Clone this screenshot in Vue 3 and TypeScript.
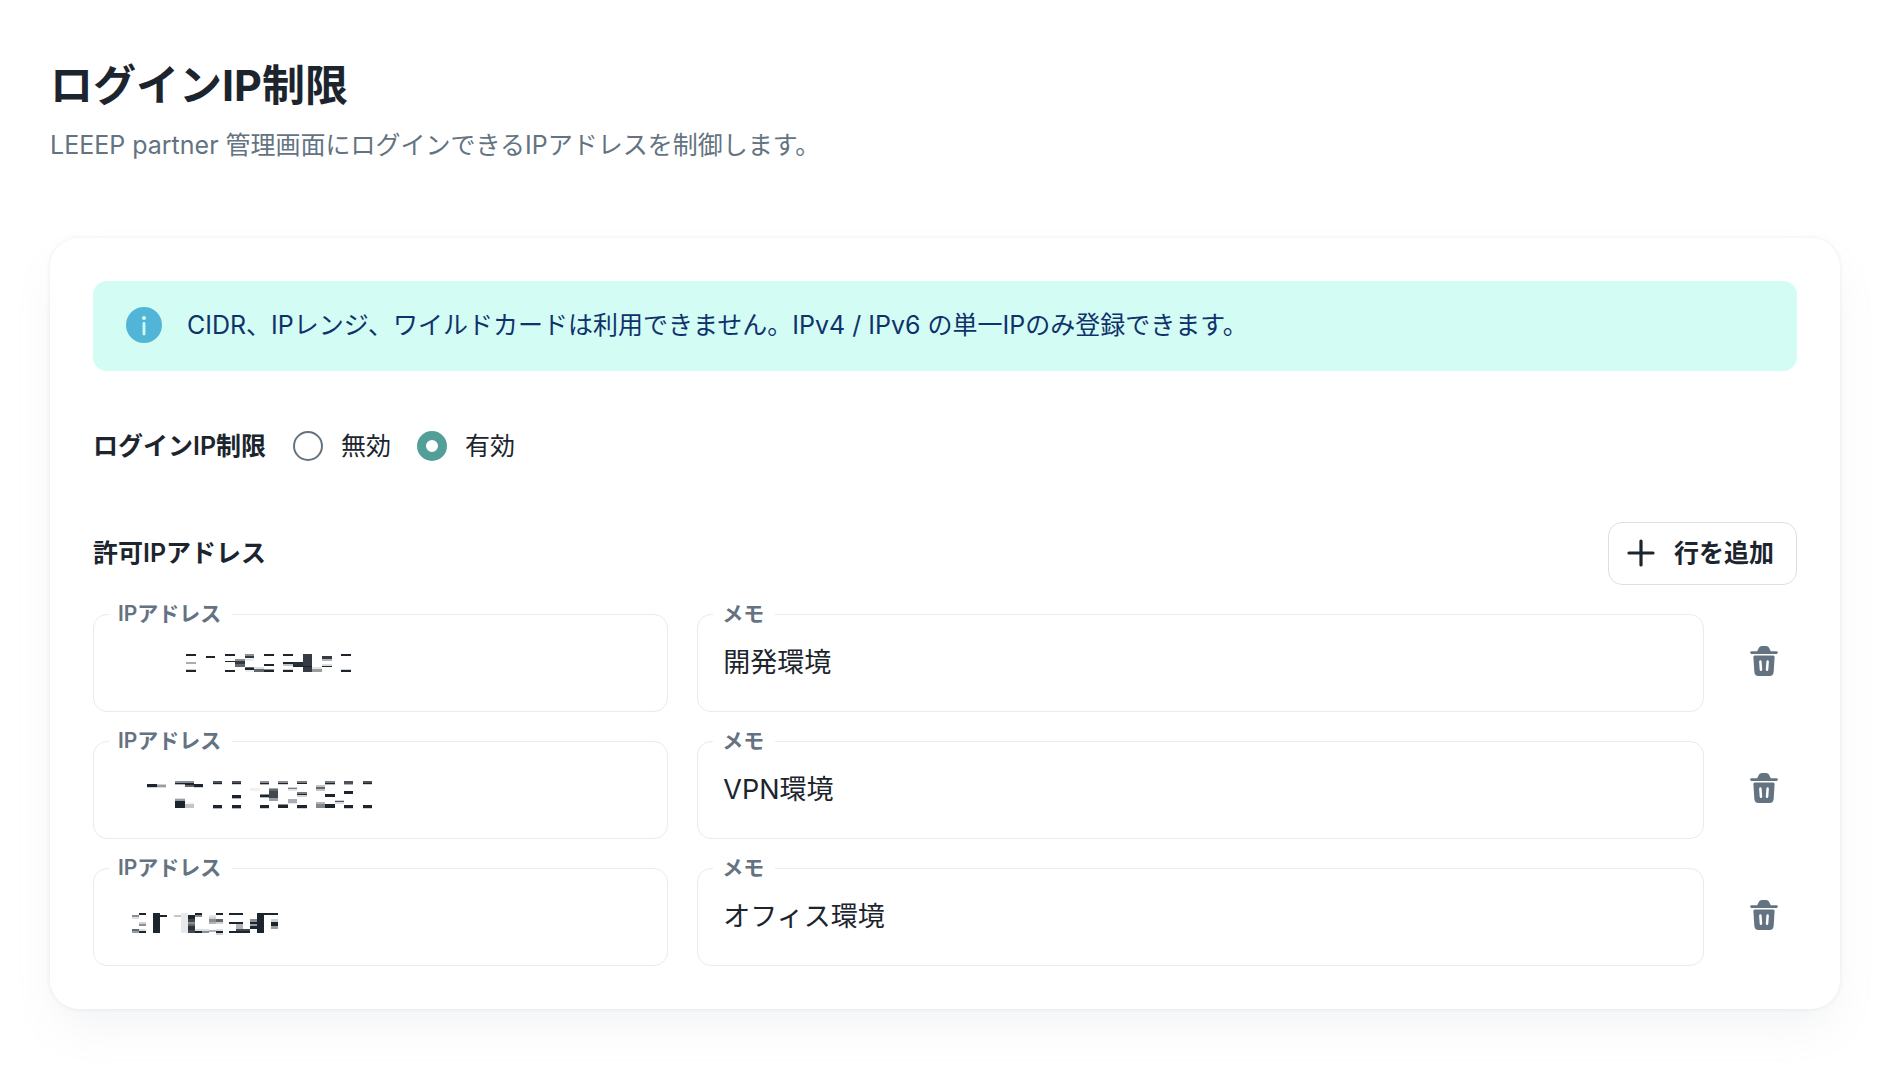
<script setup lang="ts">
import { ref } from 'vue'

type Block = [x: number, y: number, w: number, h: number, fill: string]

interface AllowedIp {
  id: number
  memo: string
  origin: string
  mask: Block[]
}

const K = '#1c252e'
const enabled = ref<'off' | 'on'>('on')

// Masked addresses: each one is a set of blocks drawn over the empty box.
const rows = ref<AllowedIp[]>([
  {
    id: 1,
    memo: '開発環境',
    origin: '39 342',
    mask: [
      [318, 462, 30, 6, K], [318, 486, 30, 6, '#a9adb1'], [318, 507, 30, 3, '#cfd1d4'], [318, 510, 30, 6, K],
      [378, 468, 27, 7, K],
      [435, 462, 30, 6, K], [435, 483, 30, 3, K], [435, 510, 30, 6, K],
      [465, 477, 30, 6, '#8b8f94'], [465, 483, 30, 10, '#343b43'], [465, 493, 30, 7, '#62676d'],
      [495, 462, 27, 6, '#8b8f94'], [495, 468, 27, 7, '#343b43'], [495, 475, 27, 8, '#ecedee'],
      [495, 500, 27, 3, '#62676d'], [495, 503, 27, 7, K], [495, 510, 27, 6, '#ecedee'],
      [522, 502, 30, 5, '#dcdee0'], [522, 507, 30, 9, '#62676d'],
      [552, 462, 30, 6, K], [552, 492, 30, 6, K], [552, 507, 30, 3, '#8b8f94'], [552, 510, 30, 6, K],
      [609, 462, 30, 6, K], [609, 486, 30, 6, K], [609, 492, 30, 6, '#c3c6c9'], [609, 507, 30, 3, '#cfd1d4'], [609, 510, 30, 6, K],
      [639, 486, 30, 12, '#272f38'], [639, 498, 30, 3, K],
      [669, 462, 27, 54, '#343b43'], [669, 498, 27, 3, K],
      [696, 501, 30, 6, '#e4e5e7'], [696, 507, 30, 9, '#999da1'],
      [726, 468, 30, 9, '#343b43'], [726, 477, 30, 6, '#b1b4b8'], [726, 491, 30, 7, '#dcdee0'], [726, 498, 30, 3, K],
      [783, 462, 30, 6, K], [783, 507, 30, 3, '#cfd1d4'], [783, 510, 30, 6, K],
    ],
  },
  {
    id: 2,
    memo: 'VPN環境',
    origin: '-51 33',
    mask: [
      [111, 162, 30, 9, K], [111, 171, 30, 3, '#cfd1d4'], [141, 162, 27, 3, '#cfd1d4'], [141, 165, 27, 6, '#999da1'], [141, 171, 27, 3, '#dcdee0'],
      [195, 153, 57, 6, '#8b8f94'], [195, 159, 57, 3, K], [195, 162, 30, 3, '#b1b4b8'],
      [225, 159, 27, 6, K], [225, 165, 27, 6, '#62676d'], [252, 162, 27, 9, K], [252, 171, 27, 3, '#cfd1d4'],
      [195, 204, 30, 3, '#dcdee0'], [195, 207, 30, 6, '#999da1'], [195, 213, 30, 21, K], [225, 216, 27, 6, '#f4f4f5'], [225, 222, 27, 12, '#c3c6c9'],
      [309, 153, 27, 9, '#4c535a'], [309, 159, 27, 3, K], [309, 162, 27, 3, '#cfd1d4'], [309, 225, 27, 9, K], [309, 234, 27, 3, '#b1b4b8'],
      [366, 153, 27, 9, '#4c535a'], [366, 159, 27, 3, K], [366, 162, 27, 3, '#cfd1d4'], [366, 195, 27, 9, K], [366, 204, 27, 3, '#b1b4b8'], [366, 225, 27, 9, K], [366, 234, 27, 3, '#b1b4b8'],
      [420, 174, 30, 9, '#f0f0f1'],
      [450, 153, 27, 6, '#8b8f94'], [450, 159, 27, 3, K], [450, 162, 27, 3, '#b1b4b8'], [450, 192, 27, 3, '#8b8f94'], [450, 195, 27, 6, K], [450, 201, 27, 3, '#b1b4b8'], [450, 225, 27, 9, K], [450, 234, 27, 3, '#cfd1d4'],
      [477, 174, 27, 3, '#a9adb1'], [477, 177, 27, 6, '#62676d'], [477, 183, 27, 22, '#414850'], [477, 205, 27, 8, '#999da1'],
      [504, 153, 30, 6, '#8b8f94'], [504, 159, 30, 3, K], [504, 162, 30, 3, '#cfd1d4'], [504, 222, 30, 3, '#8b8f94'], [504, 225, 30, 9, K],
      [534, 171, 27, 3, '#cfd1d4'], [534, 174, 27, 3, '#777c81'], [534, 177, 27, 6, '#e4e5e7'], [534, 207, 27, 12, '#a9adb1'], [534, 219, 27, 3, '#e4e5e7'],
      [561, 153, 30, 6, '#777c81'], [561, 159, 30, 3, K], [561, 186, 30, 6, '#777c81'], [561, 192, 30, 3, K], [561, 195, 30, 6, '#cfd1d4'], [561, 225, 30, 9, K], [561, 234, 30, 3, '#cfd1d4'],
      [618, 165, 27, 6, '#c3c6c9'], [618, 171, 27, 6, '#62676d'], [618, 177, 27, 6, '#c3c6c9'], [618, 216, 27, 6, '#b1b4b8'], [618, 222, 27, 12, '#82878c'],
      [645, 153, 30, 6, '#777c81'], [645, 159, 30, 3, K], [645, 162, 30, 3, '#b1b4b8'], [645, 192, 30, 9, K], [645, 222, 30, 12, K],
      [675, 210, 27, 3, '#cfd1d4'], [675, 213, 27, 4, '#4c535a'], [675, 217, 27, 4, '#dcdee0'],
      [702, 153, 27, 9, '#4c535a'], [702, 162, 27, 3, '#b1b4b8'], [702, 183, 27, 10, K], [702, 225, 27, 9, K], [702, 234, 27, 3, '#cfd1d4'],
      [759, 153, 27, 9, '#4c535a'], [759, 159, 27, 3, K], [759, 162, 27, 3, '#cfd1d4'], [759, 225, 27, 9, K], [759, 234, 27, 3, '#cfd1d4'],
    ],
  },
  {
    id: 3,
    memo: 'オフィス環境',
    origin: '-51 24',
    mask: [
      [66, 165, 21, 6, '#8b8f94'], [66, 171, 21, 6, '#dcdee0'], [87, 159, 21, 6, K], [87, 186, 21, 6, '#cfd1d4'], [87, 192, 21, 6, '#8b8f94'],
      [66, 207, 21, 6, '#62676d'], [66, 213, 21, 6, '#999da1'], [87, 207, 21, 6, '#dcdee0'], [87, 213, 21, 6, K],
      [129, 159, 21, 60, K], [150, 165, 21, 6, K],
      [192, 165, 21, 6, '#c3c6c9'], [213, 159, 21, 60, '#e8e9ea'],
      [234, 165, 21, 12, K], [234, 177, 21, 9, '#414850'], [234, 186, 21, 6, '#8b8f94'], [234, 192, 21, 6, '#62676d'], [234, 198, 21, 12, '#2b333b'], [234, 210, 21, 9, '#414850'],
      [255, 159, 21, 6, K], [255, 165, 21, 6, '#8b8f94'], [255, 207, 21, 6, '#dcdee0'], [255, 213, 21, 6, K],
      [276, 207, 21, 6, '#dcdee0'], [276, 213, 21, 6, '#8b8f94'],
      [297, 165, 21, 6, '#e4e5e7'], [297, 171, 21, 6, '#cfd1d4'], [297, 177, 21, 9, '#8b8f94'], [297, 186, 21, 6, '#b1b4b8'], [297, 210, 21, 6, '#b1b4b8'],
      [318, 159, 21, 6, K], [318, 177, 21, 9, '#62676d'], [318, 186, 21, 6, '#cfd1d4'], [318, 207, 21, 6, '#dcdee0'], [318, 213, 21, 6, K], [318, 219, 21, 6, '#cfd1d4'],
      [357, 159, 42, 6, K], [357, 186, 42, 6, K], [357, 213, 63, 6, K],
      [378, 192, 21, 15, '#b1b4b8'], [378, 207, 42, 6, '#414850'],
      [420, 177, 21, 9, '#8b8f94'], [420, 186, 21, 6, K], [420, 192, 21, 6, '#999da1'], [420, 198, 21, 9, K],
      [441, 159, 63, 6, K], [441, 159, 21, 60, K],
      [483, 177, 21, 9, '#cfd1d4'], [483, 186, 21, 12, K], [483, 198, 21, 9, '#999da1'],
    ],
  },
])

let nextId = 4

function addRow(): void {
  rows.value.push({ id: nextId++, memo: '', origin: '0 0', mask: [] })
}

function removeRow(id: number): void {
  rows.value = rows.value.filter((row) => row.id !== id)
}
</script>

<template>
  <main class="page">
    <header class="head">
      <h1>ログインIP制限</h1>
      <p>LEEEP partner 管理画面にログインできるIPアドレスを制御します。</p>
    </header>

    <section class="card">
      <div class="alert" role="note">
        <svg class="info" viewBox="0 0 36 36" aria-hidden="true">
          <circle cx="18" cy="18" r="18" fill="#51b5d8" />
          <circle cx="18" cy="11" r="2" fill="#d3fcf5" />
          <path d="M18 16.500v10.500" stroke="#d3fcf5" stroke-width="2.800" stroke-linecap="round" />
        </svg>
        <span>CIDR、IPレンジ、ワイルドカードは利用できません。IPv4 / IPv6 の単一IPのみ登録できます。</span>
      </div>

      <div class="toggle" role="radiogroup" aria-labelledby="toggle-title">
        <span id="toggle-title" class="strong">ログインIP制限</span>
        <label class="choice"><input v-model="enabled" type="radio" name="enabled" value="off" />無効</label>
        <label class="choice"><input v-model="enabled" type="radio" name="enabled" value="on" />有効</label>
      </div>

      <div class="bar">
        <h2 class="strong">許可IPアドレス</h2>
        <button class="add" type="button" @click="addRow">
          <svg viewBox="0 0 28 28" aria-hidden="true">
            <path d="M14 2v24M2 14h24" stroke="currentColor" stroke-width="3.200" stroke-linecap="round" />
          </svg>
          行を追加
        </button>
      </div>

      <div class="rows">
        <div v-for="row in rows" :key="row.id" class="row">
          <div class="field">
            <label :for="`ip-${row.id}`">IPアドレス</label>
            <input :id="`ip-${row.id}`" type="text" />
            <svg class="mask" :viewBox="`${row.origin} 960 294`" shape-rendering="crispEdges" aria-hidden="true">
              <rect v-for="(b, i) in row.mask" :key="i" :x="b[0]" :y="b[1]" :width="b[2]" :height="b[3]" :fill="b[4]" />
            </svg>
          </div>
          <div class="field">
            <label :for="`memo-${row.id}`">メモ</label>
            <input :id="`memo-${row.id}`" v-model="row.memo" type="text" />
          </div>
          <button class="remove" type="button" aria-label="削除" @click="removeRow(row.id)">
            <svg viewBox="0 0 28 30" aria-hidden="true">
              <path d="M1.500 5.200H7.200C8.600 3 9 0 12 0h4c3 0 3.400 3 4.800 5.200h5.700a1.350 1.350 0 0 1 0 2.700h-25a1.350 1.350 0 0 1 0-2.700z" fill="currentColor" />
              <path fill-rule="evenodd" d="M4.800 9.500h18.400q1.500 0 1.400 1.500l-.9 14.500q-.3 4.500-4.200 4.500h-11q-3.900 0-4.200-4.500L3.400 11q-.1-1.500 1.400-1.500zM10.300 14.200q-1.300.1-1.200 1.500l.6 8q.2 1.400 1.400 1.300 1.200-.1 1.100-1.500l-.6-8q-.2-1.400-1.300-1.300zM17.700 14.200q1.300.1 1.200 1.500l-.6 8q-.2 1.400-1.400 1.300-1.200-.1-1.100-1.500l.6-8q.2-1.400 1.300-1.300z" fill="currentColor" />
            </svg>
          </button>
        </div>
      </div>
    </section>
  </main>
</template>

<style>
body {
  margin: 0;
  background: #fff;
}
</style>

<style scoped>
.page {
  box-sizing: border-box;
  padding: 53px 48px 70px 50px;
  color: #1c252e;
  font-family: Inter, "Noto Sans CJK JP", sans-serif;
  font-size: 25px;
  line-height: 38px;
}

.page *,
.page *::before {
  box-sizing: border-box;
}

.head {
  margin-bottom: 74px;
}

h1 {
  margin: 0 0 9px;
  font-size: 43px;
  font-weight: 700;
  line-height: 64px;
}

.head p {
  margin: 0;
  color: #637381;
}

.card {
  padding: 43px;
  border-radius: 29px;
  background: #fff;
  box-shadow:
    0 0 4px rgba(145, 158, 171, 0.2),
    0 22px 43px -7px rgba(145, 158, 171, 0.12);
}

.alert {
  display: flex;
  align-items: center;
  gap: 25px;
  min-height: 90px;
  padding: 25px 32px 27px 33px;
  border-radius: 14px;
  background: #d3fcf5;
  color: #10326b;
}

.info {
  flex: none;
  width: 36px;
  height: 36px;
}

.toggle {
  display: flex;
  align-items: center;
  margin-top: 56px;
  gap: 26px;
}

.strong {
  margin: 0;
  font-size: 25px;
  font-weight: 600;
}

.toggle .strong {
  padding-right: 1px;
}

.choice {
  display: flex;
  align-items: center;
  gap: 18px;
}

.choice input {
  appearance: none;
  width: 30px;
  height: 30px;
  margin: 0;
  border: 2px solid #637381;
  border-radius: 50%;
  background: #fff;
}

.choice input:checked {
  border: 9px solid #529f99;
}

.bar {
  display: flex;
  align-items: center;
  justify-content: space-between;
  margin-top: 57px;
}

.bar .strong {
  padding-bottom: 2px;
}

.add {
  display: flex;
  align-items: center;
  gap: 19px;
  height: 63px;
  padding: 0 22px 1px 18px;
  border: 1px solid #dce0e4;
  border-radius: 14px;
  background: #fff;
  color: inherit;
  font: inherit;
  font-weight: 700;
}

.add svg {
  width: 28px;
  height: 28px;
}

.rows {
  display: grid;
  gap: 29px;
  margin-top: 29px;
}

.row {
  display: grid;
  grid-template-columns: 4fr 7fr 64px;
  align-items: center;
  gap: 29px;
}

.field {
  position: relative;
}

.field label {
  position: absolute;
  top: -16px;
  left: 16px;
  padding: 0 11px 0 9px;
  background: #fff;
  color: #637381;
  font-size: 21px;
  font-weight: 600;
  line-height: 32px;
}

.field input {
  display: block;
  width: 100%;
  height: 98px;
  padding: 0 25px 5px;
  border: 1px solid #e9ebed;
  border-radius: 14px;
  background: #fff;
  color: inherit;
  font: inherit;
  font-size: 27px;
}

.mask {
  position: absolute;
  top: 0;
  left: 0;
  width: 320px;
  height: 98px;
  pointer-events: none;
}

.remove {
  display: grid;
  place-items: center;
  width: 64px;
  height: 64px;
  padding: 0 2px 4px 0;
  border: 0;
  border-radius: 50%;
  background: none;
  color: #637381;
}

.remove svg {
  width: 28px;
  height: 30px;
}
</style>
